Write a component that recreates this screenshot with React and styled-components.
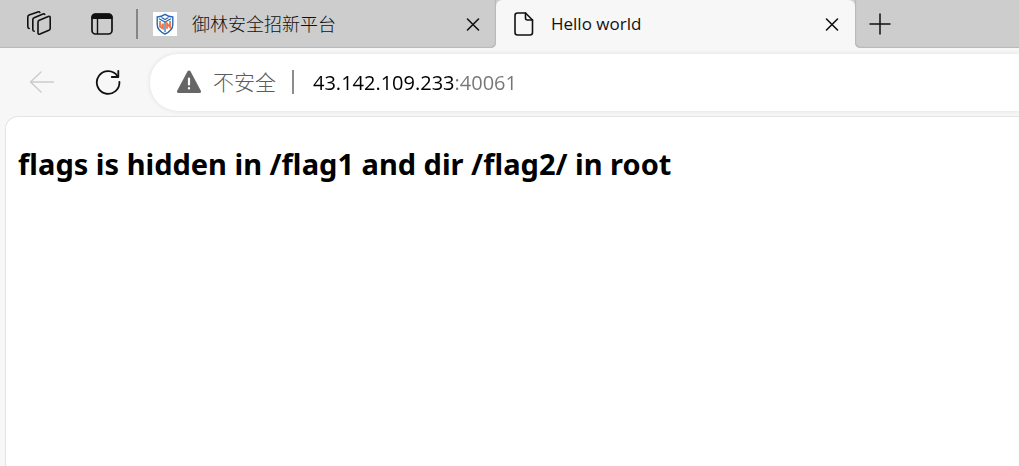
import React from "react";
import styled, { createGlobalStyle } from "styled-components";

const chrome = "#cdcdcd";
const surface = "#f7f7f7";
const uiFont = `"Open Sans", "Noto Sans CJK SC", sans-serif`;

const GlobalStyle = createGlobalStyle`
  * { box-sizing: border-box; }
  body { margin: 0; background: ${surface}; color: #111; font-family: ${uiFont}; }
  button { font: inherit; color: inherit; }
`;

const Browser = styled.div`
  display: flex;
  flex-direction: column;
  min-height: 100vh;
  overflow: hidden;
`;

const TabStrip = styled.header`
  display: flex;
  height: 48px;
`;

const StripStart = styled.div`
  display: flex;
  align-items: center;
  background: ${chrome};
  border-bottom-right-radius: 5px;
  box-shadow: inset -1px -1px 1px #b9b9b9;
`;

const StripEnd = styled.div`
  flex: 1;
  display: flex;
  align-items: center;
  padding-left: 12px;
  background: ${chrome};
  border-bottom-left-radius: 5px;
  box-shadow: inset 1px -1px 1px #b9b9b9;
`;

const IconButton = styled.button`
  display: flex;
  align-items: center;
  justify-content: center;
  flex: none;
  width: ${(p) => p.$size}px;
  height: ${(p) => p.$size}px;
  padding: 0;
  border: 0;
  background: none;
  color: ${(p) => (p.disabled ? "#cbcbcb" : "#111")};
`;

const WindowTools = styled.div`
  display: flex;
  gap: 37px;
  padding: 0 21px 0 26px;
`;

const Divider = styled.span`
  flex: none;
  width: 2px;
  height: ${(p) => p.$height}px;
  background: ${(p) => p.$color};
`;

const ActiveSlot = styled.div`
  background: linear-gradient(${chrome} 8px, ${surface} 8px);
`;

const Tab = styled.div`
  display: flex;
  align-items: center;
  width: ${(p) => (p.$active ? 359 : 358)}px;
  height: 48px;
  padding: 0 10px 0 ${(p) => (p.$active ? 16 : 15)}px;
  border-radius: 6px 6px 0 0;
  background: ${(p) => (p.$active ? surface : "transparent")};
`;

const TabTitle = styled.span`
  flex: 1;
  margin-left: 15px;
  font-size: ${(p) => p.$size}px;
  font-weight: ${(p) => p.$weight};
  line-height: 24px;
  white-space: nowrap;
`;

const Toolbar = styled.nav`
  display: flex;
  align-items: center;
  height: 68px;
  padding: 5px 0 5px 26px;
`;

const NavButtons = styled.div`
  display: flex;
  gap: 34px;
  padding-right: 26px;
`;

const AddressBar = styled.form`
  flex: 1;
  display: flex;
  align-items: center;
  min-width: 0;
  height: 57px;
  padding-left: 26px;
  border-radius: 28px 0 0 28px;
  background: #fff;
  box-shadow: 0 0 5px rgba(0, 0, 0, 0.1);
`;

const Security = styled.button`
  display: flex;
  align-items: center;
  gap: 11px;
  padding: 0;
  margin-right: 16px;
  border: 0;
  background: none;
  && { color: #5c5c5c; font-size: 21px; font-weight: 300; }
  line-height: 28px;
  white-space: nowrap;
`;

const UrlInput = styled.input`
  flex: 1;
  min-width: 0;
  height: 32px;
  margin-left: 19px;
  padding: 0;
  border: 0;
  outline: 0;
  font-family: ${uiFont};
  font-size: 20px;
  color: #111;
  background: linear-gradient(to right, #000 142px, #767676 142px);
  background-clip: text;
  -webkit-text-fill-color: transparent;
`;

const Page = styled.main`
  flex: 1;
  margin-left: 5px;
  padding: 27px 12px;
  border: 1px solid #e4e4e4;
  border-width: 1px 0 0 1px;
  border-top-left-radius: 13px;
  background: #fff;
`;

const Heading = styled.h1`
  margin: 0;
  font-family: "Noto Sans", sans-serif;
  font-size: 29px;
  line-height: 40px;
  font-weight: 700;
  color: #000;
`;

const Stroke = ({ size, width = 2, children }) => (
  <svg width={size} height={size} viewBox={`0 0 ${size} ${size}`} fill="none" stroke="currentColor"
    strokeWidth={width} strokeLinecap="round" strokeLinejoin="round" aria-hidden="true">
    {children}
  </svg>
);

const WorkspacesIcon = () => (
  <Stroke size={26} width={1.6}>
    <path d="M13.3 9.2 22.3 5.4Q24.2 4.8 24.2 6.8V17.2Q24.2 18.6 22.9 19.2L14 23Q12 23.7 12 21.7V11.2Q12 9.8 13.3 9.2Z" />
    <path d="M8.2 20.3Q6.8 20.2 6.8 18.5V8.7Q6.8 7.3 8.1 6.7L17 3Q18.3 2.6 18.8 3.4" />
    <path d="M3.2 17.5Q1.8 17.3 1.8 15.5V6Q1.8 4.6 3.1 4L11.8.9Q13.2.5 13.8 1.4" />
  </Stroke>
);

const TabActionsIcon = () => (
  <Stroke size={26} width={1.7}>
    <rect x="3" y="3" width="20" height="20" rx="3.5" />
    <path d="M3.3 7.2V6Q3.3 3.3 6.3 3.3H19.7Q22.7 3.3 22.7 6V7.2Z" fill="currentColor" />
    <path d="M8.5 8V22.5" strokeWidth="1.4" />
  </Stroke>
);

const SiteIcon = () => (
  <svg width="24" height="24" viewBox="0 0 24 24" fill="none" aria-hidden="true">
    <path fill="#fff" d="M0 0H24V24H0Z" />
    <path d="M12 2.3Q15.5 4.7 19.8 5V12.5Q19.8 18.5 12 22Q4.2 18.5 4.2 12.5V5Q8.5 4.7 12 2.3Z" stroke="#2868b4" strokeWidth="1.4" />
    <path d="M6 6.8 12 10 18 6.8M12 10V20M8.5 5.5 12 7.5 15.5 5.5" stroke="#2868b4" strokeWidth="1.2" />
    <path d="M7 9V14.7L10 16.5V11.5M8.2 13.5H10M14 16.7V11.5L17 15.2V9" stroke="#ee7440" strokeWidth="1.8" />
  </svg>
);

const FileIcon = () => (
  <Stroke size={24} width={1.6}>
    <path d="M13.5 1H5.5Q3 1 3 3.5V20.5Q3 23 5.5 23H18Q20.5 23 20.5 20.5V8Z" />
    <path d="M13.5 1V6Q13.5 8 15.5 8H20.5" />
  </Stroke>
);

const CloseIcon = () => (
  <Stroke size={14} width={1.6}>
    <path d="M1.5 2 12.5 13M12.5 2 1.5 13" />
  </Stroke>
);

const PlusIcon = () => (
  <Stroke size={22} width={1.5}>
    <path d="M11 1V21M1 11H21" />
  </Stroke>
);

const BackIcon = () => (
  <Stroke size={26} width={1.4}>
    <path d="M24.5 13H1.8M12 3 1.5 13 12 23" />
  </Stroke>
);

const ReloadIcon = () => (
  <Stroke size={26} width={1.8}>
    <path d="M24.4 12.8A11.3 11.3 0 1 1 22.5 7.2" />
    <path d="M23.3 1.8V8H16.8" />
  </Stroke>
);

const WarningIcon = () => (
  <svg width="26" height="26" viewBox="0 0 26 26" aria-hidden="true">
    <path d="M11.4 2.5Q13 .3 14.6 2.5L24.7 21.5Q25.7 24 23.5 24H2.5Q.3 24 1.3 21.5Z" fill="#666" />
    <path d="M13 9.5V15.5M13 19V19.5" stroke="#fff" strokeWidth="2.2" strokeLinecap="round" />
  </svg>
);

export default function App() {
  return (
    <>
      <GlobalStyle />
      <Browser>
        <TabStrip>
          <StripStart>
            <WindowTools>
              <IconButton $size={26} aria-label="Workspaces"><WorkspacesIcon /></IconButton>
              <IconButton $size={26} aria-label="Tab actions"><TabActionsIcon /></IconButton>
            </WindowTools>
            <Divider $height={30} $color="#858585" />
            <Tab>
              <SiteIcon />
              <TabTitle $size={18} $weight={300}>御林安全招新平台</TabTitle>
              <IconButton $size={26} aria-label="Close tab"><CloseIcon /></IconButton>
            </Tab>
          </StripStart>
          <ActiveSlot>
            <Tab $active>
              <FileIcon />
              <TabTitle $size={17} $weight={400}>Hello world</TabTitle>
              <IconButton $size={26} aria-label="Close tab"><CloseIcon /></IconButton>
            </Tab>
          </ActiveSlot>
          <StripEnd>
            <IconButton $size={26} aria-label="New tab"><PlusIcon /></IconButton>
          </StripEnd>
        </TabStrip>
        <Toolbar>
          <NavButtons>
            <IconButton $size={32} disabled aria-label="Back"><BackIcon /></IconButton>
            <IconButton $size={32} aria-label="Reload"><ReloadIcon /></IconButton>
          </NavButtons>
          <AddressBar>
            <Security type="button"><WarningIcon />不安全</Security>
            <Divider $height={24} $color="#8c8c8c" />
            <UrlInput aria-label="Address" defaultValue="43.142.109.233:40061" spellCheck={false} />
          </AddressBar>
        </Toolbar>
        <Page>
          <Heading>flags is hidden in /flag1 and dir /flag2/ in root</Heading>
        </Page>
      </Browser>
    </>
  );
}
